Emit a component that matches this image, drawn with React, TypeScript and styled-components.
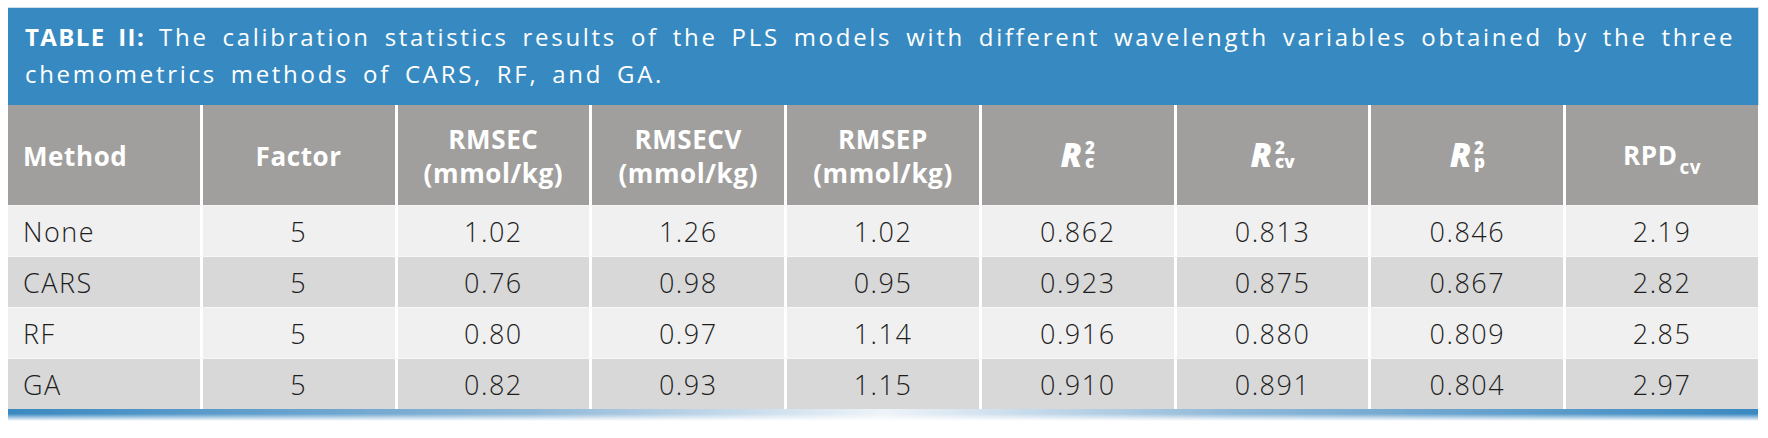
import React from 'react'
import styled, { createGlobalStyle } from 'styled-components'

const GlobalStyle = createGlobalStyle`
  html, body {
    margin: 0;
    padding: 0;
    background: #ffffff;
  }
  body {
    font-family: "Open Sans", "Liberation Sans", sans-serif;
  }
`

const columns = ['Method', 'Factor', 'RMSEC', 'RMSECV', 'RMSEP', 'R2c', 'R2cv', 'R2p', 'RPDcv']

const rows = [
  ['None', '5', '1.02', '1.26', '1.02', '0.862', '0.813', '0.846', '2.19'],
  ['CARS', '5', '0.76', '0.98', '0.95', '0.923', '0.875', '0.867', '2.82'],
  ['RF', '5', '0.80', '0.97', '1.14', '0.916', '0.880', '0.809', '2.85'],
  ['GA', '5', '0.82', '0.93', '1.15', '0.910', '0.891', '0.804', '2.97'],
]

const RSquared = ({ sub }: { sub: string }) => (
  <RLabel>
    R
    <Scripts>
      <span>2</span>
      <span>{sub}</span>
    </Scripts>
  </RLabel>
)

const headerLabel = (name: string) => {
  switch (name) {
    case 'RMSEC':
    case 'RMSECV':
    case 'RMSEP':
      return (
        <>
          {name}
          <br />
          (mmol/kg)
        </>
      )
    case 'R2c':
      return <RSquared sub="c" />
    case 'R2cv':
      return <RSquared sub="cv" />
    case 'R2p':
      return <RSquared sub="p" />
    case 'RPDcv':
      return (
        <>
          RPD<Sub>cv</Sub>
        </>
      )
    default:
      return name
  }
}

const App = () => {
  return (
    <Page>
      <GlobalStyle />
      <Frame>
        <Caption>
          <b>TABLE II:</b> The calibration statistics results of the PLS models with different wavelength variables obtained by the three
          <br />
          chemometrics methods of CARS, RF, and GA.
        </Caption>
        <Body>
          <Row $head>
            {columns.map((c, i) => (
              <HeadCell key={c} $left={i === 0}>
                <div>{headerLabel(c)}</div>
              </HeadCell>
            ))}
          </Row>
          {rows.map((r, ri) => (
            <Row key={r[0]}>
              {r.map((v, i) => (
                <Cell key={i} $left={i === 0} $shade={ri % 2 === 1}>
                  {v}
                </Cell>
              ))}
            </Row>
          ))}
        </Body>
        <Footer />
      </Frame>
    </Page>
  )
}

export default App

const Page = styled.div`
  padding: 7px 9px 0 8px;
`

const Frame = styled.div`
  width: 1751px;
`

const Caption = styled.div`
  background: #378ac1;
  border-top: 1px solid #cfdfeb;
  border-right: 1px solid #d3dde5;
  color: #ffffff;
  font-size: 24px;
  letter-spacing: 2.7px;
  word-spacing: 5px;
  line-height: 37px;
  padding: 10px 0 13px 17px;
  white-space: nowrap;
  height: 74px;

  b {
    font-weight: 700;
    letter-spacing: 1.4px;
  }
`

const Body = styled.div`
  display: flex;
  flex-direction: column;
  gap: 1px;
  background: #f7f7f7;
  width: 1750px;
`

const Row = styled.div<{ $head?: boolean }>`
  display: grid;
  grid-template-columns: repeat(9, 1fr);
  column-gap: 3px;
  background: #ffffff;
  height: ${(p) => (p.$head ? '100px' : '50px')};
`

const HeadCell = styled.div<{ $left?: boolean }>`
  background: #a09f9e;
  color: #ffffff;
  font-weight: 700;
  font-size: 26px;
  letter-spacing: 0.6px;
  line-height: 34px;
  display: flex;
  align-items: center;
  justify-content: ${(p) => (p.$left ? 'flex-start' : 'center')};
  text-align: ${(p) => (p.$left ? 'left' : 'center')};
  padding-left: ${(p) => (p.$left ? '15px' : '0')};
  padding-top: 2px;
`

const Cell = styled.div<{ $left?: boolean; $shade?: boolean }>`
  background: ${(p) => (p.$shade ? '#d8d8d8' : '#f0f0f0')};
  color: #1e1e1e;
  font-weight: 300;
  font-size: 27px;
  letter-spacing: 1.5px;
  display: flex;
  align-items: center;
  justify-content: ${(p) => (p.$left ? 'flex-start' : 'center')};
  padding-left: ${(p) => (p.$left ? '15px' : '0')};
`

const RLabel = styled.span`
  display: inline-flex;
  align-items: center;
  font-style: italic;
  font-size: 33px;
  font-weight: 800;
  letter-spacing: 0;
`

const Scripts = styled.span`
  display: inline-flex;
  flex-direction: column;
  font-style: normal;
  font-size: 17px;
  line-height: 14px;
  margin-left: 3px;
  text-align: left;
`

const Sub = styled.span`
  font-size: 19px;
  position: relative;
  top: 9px;
  margin-left: 2px;
`

const Footer = styled.div`
  height: 12px;
  width: 1750px;
  background:
    linear-gradient(to bottom, rgba(255, 255, 255, 0) 40%, #ffffff 100%),
    linear-gradient(to right, #3a89c1 0%, #8fb8d8 30%, #eef3f8 50%, #8fb8d8 70%, #3a89c1 100%);
`
